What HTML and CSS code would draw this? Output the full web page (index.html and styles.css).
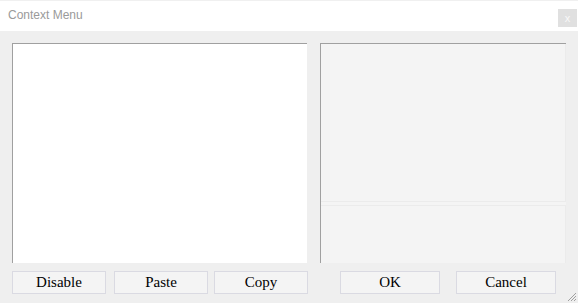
FILE: index.html
```html
<!DOCTYPE html>
<html lang="en">
<head>
  <meta charset="UTF-8" />
  <title>Context Menu</title>
  <link rel="stylesheet" href="styles.css">
</head>
<body>
  <div class="window">
    <div class="titlebar">
      <span class="title">Context Menu</span>
      <span class="close">x</span>
    </div>
    <div class="content">
      <div class="panes">
        <div class="list"></div>
        <div class="side">
          <div class="side-top"></div>
          <div class="side-bottom"></div>
        </div>
      </div>
      <div class="buttons">
        <div class="group-left">
          <button class="btn btn-wide">Disable</button>
          <button class="btn btn-wide">Paste</button>
          <button class="btn btn-wide btn-copy">Copy</button>
        </div>
        <div class="group-right">
          <button class="btn btn-dlg">OK</button>
          <button class="btn btn-dlg">Cancel</button>
        </div>
      </div>
      <svg class="grip" width="12" height="12" viewBox="0 0 12 12">
        <path d="M11 3 L3 11 M11 6 L6 11 M11 9 L9 11" stroke="#a0a0a0" stroke-width="1" fill="none"/>
      </svg>
    </div>
  </div>
</body>
</html>
```

FILE: styles.css
```css
body {
  margin: 0;
  font-family: "Liberation Sans", Arial, sans-serif;
}

.window {
  width: 578px;
  height: 303px;
  display: flex;
  flex-direction: column;
  background-color: #efefef;
}

.titlebar {
  height: 31px;
  box-sizing: border-box;
  border-top: 1px solid #f0f0f0;
  background-color: #fff;
  display: flex;
  justify-content: space-between;
  align-items: center;
  padding-left: 8px;
  padding-right: 1px;
}

.title {
  font-size: 12px;
  color: #9a9a9a;
  margin-top: -2px;
}

.close {
  width: 19px;
  height: 18px;
  margin-top: 3px;
  background-color: #e0e0e0;
  color: #f8f8f8;
  font-size: 11px;
  display: flex;
  align-items: center;
  justify-content: center;
}

.content {
  flex: 1;
  position: relative;
  padding: 12px 12px 0 12px;
}

.panes {
  display: flex;
  gap: 13px;
  height: 220px;
}

.list {
  width: 295px;
  box-sizing: border-box;
  border-top: 1px solid #a0a0a0;
  border-left: 1px solid #a0a0a0;
  background-color: #fff;
}

.side {
  width: 246px;
  box-sizing: border-box;
  border-top: 1px solid #a0a0a0;
  border-left: 1px solid #a0a0a0;
  background-color: #f4f4f4;
  display: flex;
  flex-direction: column;
  gap: 3px;
}

.side-top {
  height: 157px;
  border-right: 1px solid #ebebeb;
  border-bottom: 1px solid #ebebeb;
}

.side-bottom {
  flex: 1;
  border-top: 1px solid #ebebeb;
  border-right: 1px solid #ebebeb;
}

.buttons {
  display: flex;
  margin-top: 8px;
}

.group-left {
  display: flex;
  gap: 8px;
}

.group-right {
  display: flex;
  gap: 16px;
  margin-left: 32px;
}

.btn {
  height: 23px;
  box-sizing: border-box;
  border: 1px solid #dadae2;
  background-color: #f4f4f4;
  font-family: "Liberation Serif", "Times New Roman", serif;
  font-size: 15px;
  color: #000;
  padding: 0;
}

.btn-wide {
  width: 94px;
}

.btn-copy {
  margin-left: -2px;
}

.btn-dlg {
  width: 100px;
}

.grip {
  position: absolute;
  right: 1px;
  bottom: 1px;
}
```
